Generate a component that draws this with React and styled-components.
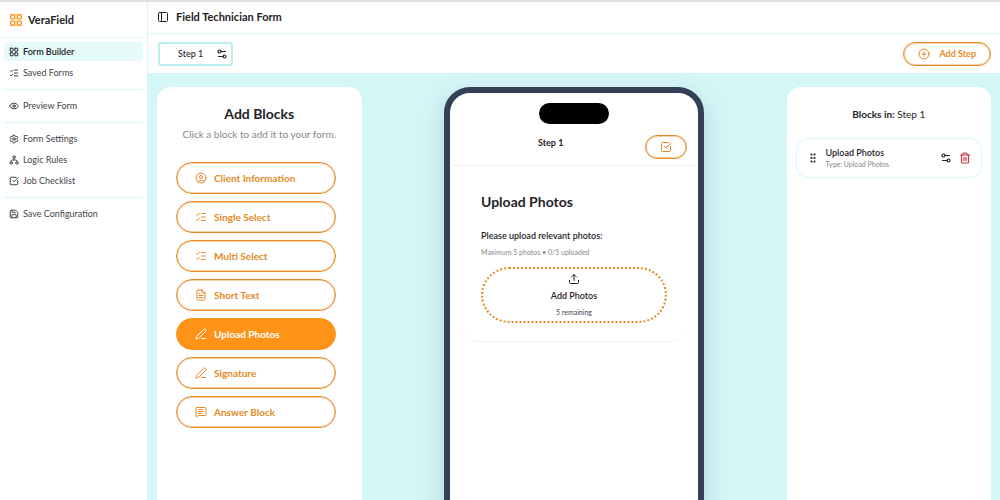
import React from "react";
import styled, { createGlobalStyle } from "styled-components";
import {
  CirclePlus,
  CircleUser,
  Eye,
  FileText,
  GripVertical,
  LayoutGrid,
  ListChecks,
  MessageSquareText,
  PanelLeft,
  PenLine,
  Save,
  Settings,
  Settings2,
  SquareCheckBig,
  Trash2,
  Upload,
} from "lucide-react";

const c = {
  ink: "#1f2328",
  text: "#3f444b",
  muted: "#85888c",
  orange: "#e58a26",
  orangeSoft: "rgba(229, 138, 38, 0.4)",
  orangeFill: "#ff9318",
  aqua: "#d5f6f7",
  aquaSoft: "#e6fafa",
  navy: "#334056",
};

const GlobalStyle = createGlobalStyle`
  *, *::before, *::after { box-sizing: border-box; }
  body { margin: 0; }
  body, button { font-family: Lato, "Liberation Sans", sans-serif; color: ${c.ink}; }
  h1, h2, h3, p, ul { margin: 0; padding: 0; }
  ul { list-style: none; }
  button { background: none; border: 0; padding: 0; cursor: pointer; }
  svg { display: block; flex: none; }
`;

const Shell = styled.div`
  display: flex;
  height: 100vh;
  border-top: 2px solid #dfdfdf;
  background: #fff;
  overflow: hidden;
`;

const Sidebar = styled.aside`
  flex: none;
  width: 148px;
  border-right: 1px solid ${c.aqua};
`;

const Brand = styled.div`
  display: flex;
  align-items: center;
  gap: 5px;
  height: 36px;
  padding-left: 9px;
  border-bottom: 1px solid ${c.aquaSoft};
  font-size: 11px;
  font-weight: 700;
`;

const NavGroup = styled.ul`
  margin: 0 4px;
  padding: 4px 0 5px;

  & + & {
    border-top: 1px solid ${c.aqua};
    padding-top: 6px;
  }
`;

const NavLink = styled.a`
  display: flex;
  align-items: center;
  gap: 4px;
  height: 19px;
  margin-bottom: 2px;
  padding-left: 5px;
  border-radius: 4px;
  background: ${(p) => (p.$active ? c.aquaSoft : "transparent")};
  color: ${(p) => (p.$active ? c.ink : c.text)};
  font-size: 9px;
  font-weight: ${(p) => (p.$active ? 600 : 400)};
  text-decoration: none;
`;

const Main = styled.main`
  display: flex;
  flex: 1;
  flex-direction: column;
  min-width: 0;
`;

const TitleBar = styled.header`
  display: flex;
  align-items: center;
  gap: 7px;
  height: 32px;
  flex: none;
  padding: 0 9px 2px;
  border-bottom: 1px solid ${c.aqua};
`;

const PageTitle = styled.h1`
  font-size: 11px;
  font-weight: 700;
`;

const StepBar = styled.div`
  display: flex;
  align-items: center;
  justify-content: space-between;
  flex: none;
  height: 39px;
  padding: 0 9px 0 10px;
`;

const StepTab = styled.div`
  display: flex;
  align-items: center;
  gap: 13px;
  height: 24px;
  padding: 0 3px 0 18px;
  border: 2px solid #bdeeef;
  border-radius: 3px;
`;

const StepName = styled.button`
  font-size: 9px;
  font-weight: 500;
`;

const OutlineButton = styled.button`
  display: flex;
  align-items: center;
  justify-content: center;
  gap: 9px;
  height: 24px;
  padding: 0 14px;
  border: 1px solid ${c.orange};
  border-radius: 12px;
  box-shadow: inset 0 0 0 1px ${c.orangeSoft};
  color: ${c.orange};
  font-size: 9px;
  font-weight: 700;
`;

const Workspace = styled.div`
  display: grid;
  grid-template-columns: 1fr 2fr 1fr;
  gap: 8px;
  flex: 1;
  min-height: 0;
  padding: 14px 9px 0;
  background: ${c.aqua};
  overflow: hidden auto;
  scrollbar-width: none;
`;

const Panel = styled.section`
  min-height: 440px;
  padding: ${(p) => p.$padding};
  border-radius: 14px 14px 0 0;
  background: #fff;
`;

const PanelTitle = styled.h2`
  font-size: 14px;
  font-weight: 700;
  line-height: 18px;
  text-align: center;
`;

const PanelHint = styled.p`
  margin-top: 4px;
  color: ${c.muted};
  font-size: 10px;
  line-height: 14px;
  text-align: center;
  white-space: nowrap;
`;

const BlockList = styled.div`
  display: grid;
  gap: 7px;
  margin: 21px 8px 0 1px;
`;

const BlockButton = styled.button`
  display: flex;
  align-items: center;
  gap: 7px;
  height: 32px;
  padding-left: 18px;
  border: 1px solid ${(p) => (p.$active ? c.orangeFill : c.orange)};
  border-radius: 16px;
  box-shadow: inset 0 0 0 1px ${(p) => (p.$active ? c.orangeFill : c.orangeSoft)};
  background: ${(p) => (p.$active ? c.orangeFill : "#fff")};
  color: ${(p) => (p.$active ? "#fff" : c.orange)};
  font-size: 10px;
  font-weight: 700;
`;

const Phone = styled.section`
  justify-self: center;
  width: 260px;
  min-height: 520px;
  border: 6px solid ${c.navy};
  border-radius: 26px;
  background: #fff;
  box-shadow: 0 10px 24px rgba(30, 90, 100, 0.22);
`;

const Island = styled.div`
  width: 70px;
  height: 21px;
  margin: 10px auto 0;
  border-radius: 11px;
  background: #000;
`;

const PhoneHeader = styled.div`
  display: grid;
  grid-template-columns: 1fr auto 1fr;
  height: 42px;
  margin: 0 3px;
  padding: 11px 8px 0 0;
  border-bottom: 1px solid #ecedef;
`;

const PhoneStep = styled.h2`
  grid-column: 1 / 3;
  padding-left: 85px;
  font-size: 9px;
  font-weight: 700;
  line-height: 15px;
`;

const CheckButton = styled(OutlineButton)`
  justify-self: end;
  width: 42px;
`;

const UploadCard = styled.div`
  margin: 0 13px 0 12px;
  padding: 26px 18px 18px 19px;
  border-bottom: 1px solid #f1f2f3;
  border-radius: 0 0 16px 16px;
`;

const CardTitle = styled.h3`
  font-size: 14px;
  font-weight: 700;
  line-height: 20px;
`;

const Question = styled.p`
  margin-top: 17px;
  font-size: 9px;
  font-weight: 600;
  line-height: 14px;
`;

const Limit = styled.p`
  margin-top: 3px;
  color: ${c.muted};
  font-size: 7px;
  line-height: 12px;
`;

const DropZone = styled.button`
  display: flex;
  flex-direction: column;
  align-items: center;
  width: 100%;
  height: 56px;
  margin-top: 9px;
  padding-top: 4px;
  border: 2px dotted ${c.orange};
  border-radius: 28px;
  color: ${c.ink};
`;

const DropLabel = styled.span`
  margin-top: 5px;
  font-size: 9px;
  font-weight: 600;
  line-height: 12px;
`;

const DropCount = styled.span`
  margin-top: 4px;
  color: ${c.text};
  font-size: 7px;
  line-height: 12px;
`;

const StepHeading = styled.h2`
  font-size: 10px;
  font-weight: 400;
  line-height: 16px;
  text-align: center;
`;

const BlockRow = styled.div`
  display: flex;
  align-items: center;
  gap: 7px;
  height: 40px;
  margin-top: 16px;
  padding: 0 10px;
  border: 1px solid ${c.aqua};
  border-radius: 12px;
`;

const BlockInfo = styled.div`
  flex: 1;
  min-width: 0;
  white-space: nowrap;
`;

const BlockName = styled.p`
  font-size: 9px;
  font-weight: 600;
  line-height: 12px;
`;

const BlockType = styled.p`
  color: ${c.muted};
  font-size: 7px;
  line-height: 11px;
`;

const IconButton = styled.button`
  color: ${(p) => (p.$danger ? "#c93b42" : c.ink)};
`;

function LogicIcon({ size }) {
  return (
    <svg width={size} height={size} viewBox="0 0 24 24" fill="none" stroke="currentColor" strokeWidth="2.4" strokeLinecap="round" strokeLinejoin="round">
      <circle cx="12" cy="5" r="3" />
      <circle cx="5" cy="19" r="3" />
      <circle cx="19" cy="19" r="3" />
      <path d="M12 8v4M5 16v-1a3 3 0 0 1 3-3h8a3 3 0 0 1 3 3v1" />
    </svg>
  );
}

const navGroups = [
  [
    { label: "Form Builder", Icon: LayoutGrid, active: true },
    { label: "Saved Forms", Icon: ListChecks },
  ],
  [{ label: "Preview Form", Icon: Eye }],
  [
    { label: "Form Settings", Icon: Settings },
    { label: "Logic Rules", Icon: LogicIcon },
    { label: "Job Checklist", Icon: SquareCheckBig },
  ],
  [{ label: "Save Configuration", Icon: Save }],
];

const blocks = [
  { label: "Client Information", Icon: CircleUser },
  { label: "Single Select", Icon: ListChecks },
  { label: "Multi Select", Icon: ListChecks },
  { label: "Short Text", Icon: FileText },
  { label: "Upload Photos", Icon: PenLine, active: true },
  { label: "Signature", Icon: PenLine },
  { label: "Answer Block", Icon: MessageSquareText },
];

export default function App() {
  return (
    <>
      <GlobalStyle />
      <Shell>
        <Sidebar>
          <Brand>
            <LayoutGrid size={14} strokeWidth={2.4} color={c.orangeFill} />
            VeraField
          </Brand>
          <nav>
            {navGroups.map((group) => (
              <NavGroup key={group[0].label}>
                {group.map(({ label, Icon, active }) => (
                  <li key={label}>
                    <NavLink href="#" $active={active}>
                      <Icon size={10} strokeWidth={2.4} />
                      {label}
                    </NavLink>
                  </li>
                ))}
              </NavGroup>
            ))}
          </nav>
        </Sidebar>
        <Main>
          <TitleBar>
            <IconButton aria-label="Toggle sidebar">
              <PanelLeft size={12} />
            </IconButton>
            <PageTitle>Field Technician Form</PageTitle>
          </TitleBar>
          <StepBar>
            <StepTab>
              <StepName>Step 1</StepName>
              <IconButton aria-label="Step options">
                <Settings2 size={12} strokeWidth={2.4} />
              </IconButton>
            </StepTab>
            <OutlineButton>
              <CirclePlus size={12} />
              Add Step
            </OutlineButton>
          </StepBar>
          <Workspace>
            <Panel $padding="18px 18px 0">
              <PanelTitle>Add Blocks</PanelTitle>
              <PanelHint>Click a block to add it to your form.</PanelHint>
              <BlockList>
                {blocks.map(({ label, Icon, active }) => (
                  <BlockButton key={label} $active={active}>
                    <Icon size={12} />
                    {label}
                  </BlockButton>
                ))}
              </BlockList>
            </Panel>
            <Phone>
              <Island />
              <PhoneHeader>
                <PhoneStep>Step 1</PhoneStep>
                <CheckButton aria-label="Open checklist">
                  <SquareCheckBig size={12} />
                </CheckButton>
              </PhoneHeader>
              <UploadCard>
                <CardTitle>Upload Photos</CardTitle>
                <Question>Please upload relevant photos:</Question>
                <Limit>Maximum 5 photos • 0/5 uploaded</Limit>
                <DropZone>
                  <Upload size={12} />
                  <DropLabel>Add Photos</DropLabel>
                  <DropCount>5 remaining</DropCount>
                </DropZone>
              </UploadCard>
            </Phone>
            <Panel $padding="19px 9px 0">
              <StepHeading>
                <strong>Blocks in:</strong> Step 1
              </StepHeading>
              <BlockRow>
                <GripVertical size={12} strokeWidth={2.4} />
                <BlockInfo>
                  <BlockName>Upload Photos</BlockName>
                  <BlockType>Type: Upload Photos</BlockType>
                </BlockInfo>
                <IconButton aria-label="Block options">
                  <Settings2 size={12} strokeWidth={2.4} />
                </IconButton>
                <IconButton $danger aria-label="Delete block">
                  <Trash2 size={12} strokeWidth={2.4} />
                </IconButton>
              </BlockRow>
            </Panel>
          </Workspace>
        </Main>
      </Shell>
    </>
  );
}
